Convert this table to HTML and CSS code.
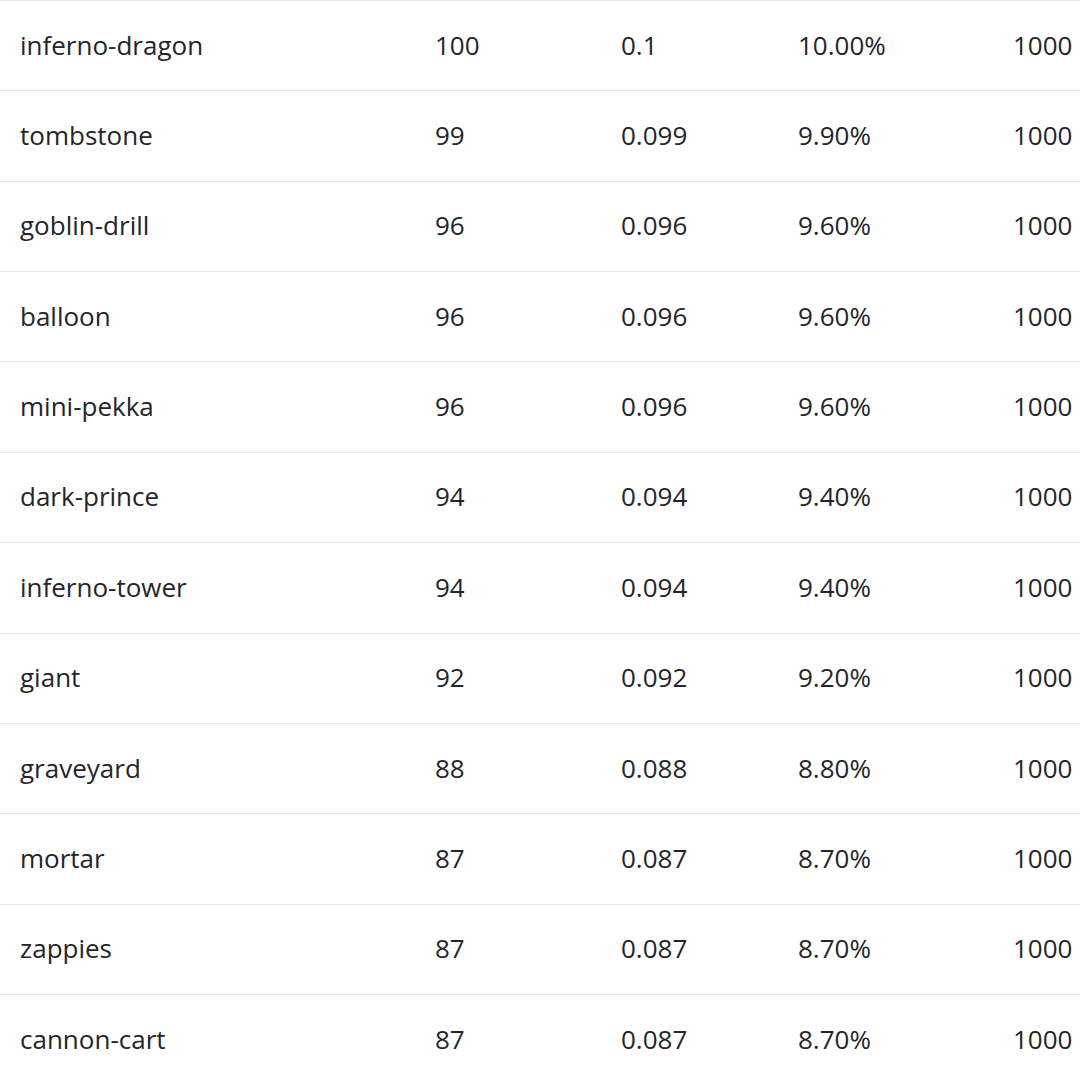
FILE: index.html
```html
<!DOCTYPE html>
<html>
<head>
<meta charset="utf-8">
<link rel="stylesheet" href="styles.css">
</head>
<body>
<div class="table">
  <div class="row"><div class="cell">inferno-dragon</div><div class="cell">100</div><div class="cell">0.1</div><div class="cell">10.00%</div><div class="cell">1000</div></div>
  <div class="row"><div class="cell">tombstone</div><div class="cell">99</div><div class="cell">0.099</div><div class="cell">9.90%</div><div class="cell">1000</div></div>
  <div class="row"><div class="cell">goblin-drill</div><div class="cell">96</div><div class="cell">0.096</div><div class="cell">9.60%</div><div class="cell">1000</div></div>
  <div class="row"><div class="cell">balloon</div><div class="cell">96</div><div class="cell">0.096</div><div class="cell">9.60%</div><div class="cell">1000</div></div>
  <div class="row"><div class="cell">mini-pekka</div><div class="cell">96</div><div class="cell">0.096</div><div class="cell">9.60%</div><div class="cell">1000</div></div>
  <div class="row"><div class="cell">dark-prince</div><div class="cell">94</div><div class="cell">0.094</div><div class="cell">9.40%</div><div class="cell">1000</div></div>
  <div class="row"><div class="cell">inferno-tower</div><div class="cell">94</div><div class="cell">0.094</div><div class="cell">9.40%</div><div class="cell">1000</div></div>
  <div class="row"><div class="cell">giant</div><div class="cell">92</div><div class="cell">0.092</div><div class="cell">9.20%</div><div class="cell">1000</div></div>
  <div class="row"><div class="cell">graveyard</div><div class="cell">88</div><div class="cell">0.088</div><div class="cell">8.80%</div><div class="cell">1000</div></div>
  <div class="row"><div class="cell">mortar</div><div class="cell">87</div><div class="cell">0.087</div><div class="cell">8.70%</div><div class="cell">1000</div></div>
  <div class="row"><div class="cell">zappies</div><div class="cell">87</div><div class="cell">0.087</div><div class="cell">8.70%</div><div class="cell">1000</div></div>
  <div class="row"><div class="cell">cannon-cart</div><div class="cell">87</div><div class="cell">0.087</div><div class="cell">8.70%</div><div class="cell">1000</div></div>
</div>
</body>
</html>
```
FILE: styles.css
```css
html, body {
  margin: 0;
  padding: 0;
  background: #ffffff;
  overflow: hidden;
}
.table {
  font-family: "Open Sans", "Noto Sans", sans-serif;
  font-size: 26px;
  color: #24252c;
  width: 1120px;
}
.row {
  display: grid;
  grid-template-columns: 415px 186px 177px 215px 127px;
  height: 89.36px;
  border-top: 1px solid #e6e6e8;
  align-items: center;
}
.cell {
  padding-left: 20px;
  padding-bottom: 2px;
  white-space: nowrap;
}
```
